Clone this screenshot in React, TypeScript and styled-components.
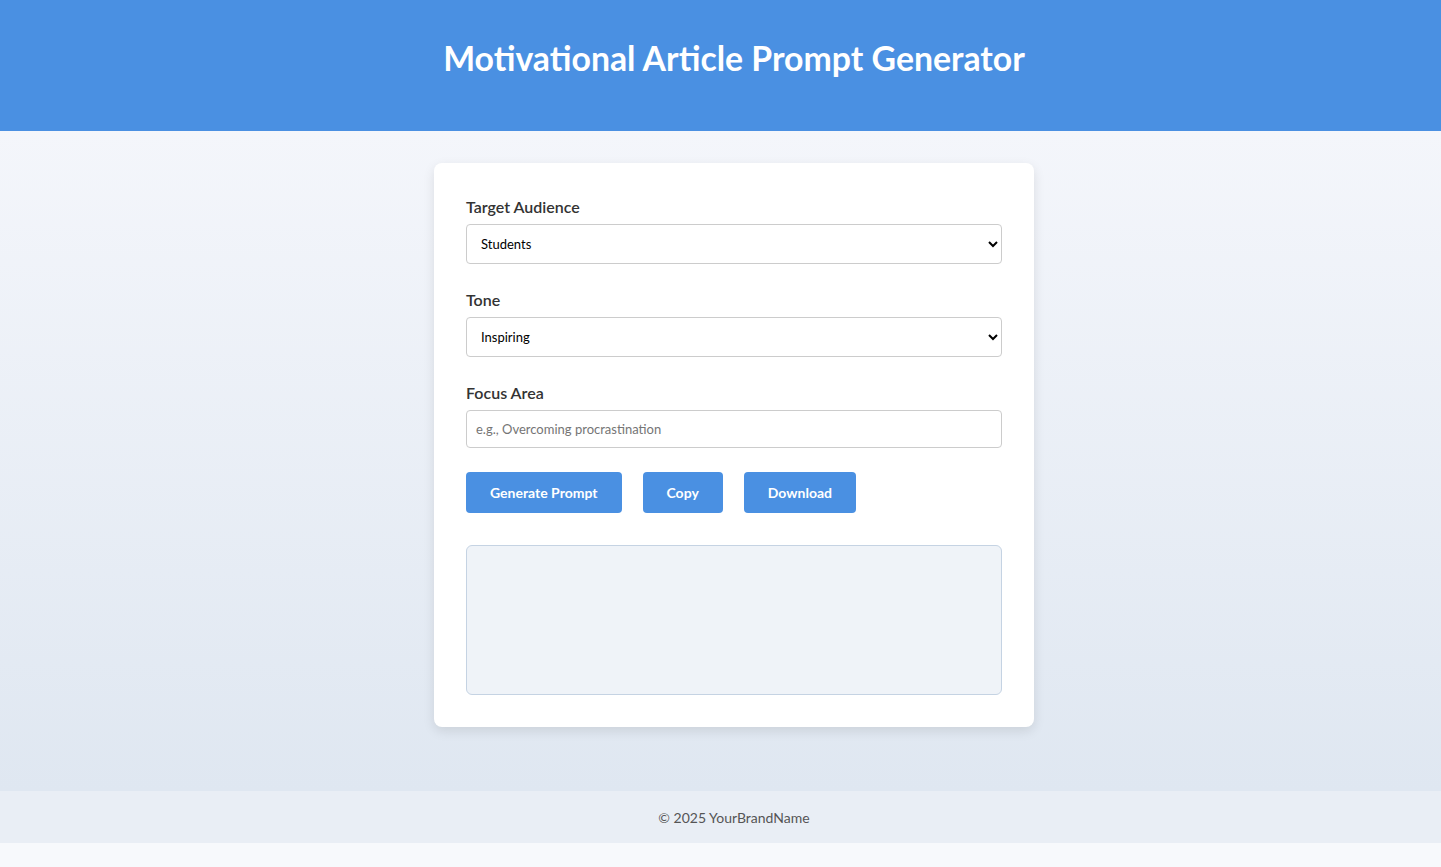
import styled, { createGlobalStyle } from 'styled-components';
import { useState } from 'react';

const GlobalStyle = createGlobalStyle`
  * {
    box-sizing: border-box;
  }

  body {
    margin: 0;
    font-family: 'Segoe UI', Lato, sans-serif;
    background: #f7f9fc;
    color: #333;
  }
`;

const audiences = ['Students', 'Professionals', 'Entrepreneurs', 'Athletes'];
const tones = ['Inspiring', 'Encouraging', 'Empowering', 'Reflective'];

const App = () => {
  const [audience, setAudience] = useState('Students');
  const [tone, setTone] = useState('Inspiring');
  const [focus, setFocus] = useState('');
  const [output, setOutput] = useState('');

  const generate = () => {
    const topic = focus || 'personal growth';
    setOutput(
      `Write a ${tone.toLowerCase()} motivational article for ${audience.toLowerCase()} about ${topic}.`
    );
  };

  const copy = () => {
    navigator.clipboard?.writeText(output);
  };

  const download = () => {
    const blob = new Blob([output], { type: 'text/plain' });
    const url = URL.createObjectURL(blob);
    const a = document.createElement('a');
    a.href = url;
    a.download = 'prompt.txt';
    a.click();
    URL.revokeObjectURL(url);
  };

  return (
    <>
      <GlobalStyle />
      <Header>
        <h1>Motivational Article Prompt Generator</h1>
      </Header>
      <Main>
        <Card>
          <FormGroup>
            <Label htmlFor="audience">Target Audience</Label>
            <Select id="audience" value={audience} onChange={(e) => setAudience(e.target.value)}>
              {audiences.map((a) => (
                <option key={a}>{a}</option>
              ))}
            </Select>
          </FormGroup>
          <FormGroup>
            <Label htmlFor="tone">Tone</Label>
            <Select id="tone" value={tone} onChange={(e) => setTone(e.target.value)}>
              {tones.map((t) => (
                <option key={t}>{t}</option>
              ))}
            </Select>
          </FormGroup>
          <FormGroup>
            <Label htmlFor="focus">Focus Area</Label>
            <Input
              id="focus"
              type="text"
              placeholder="e.g., Overcoming procrastination"
              value={focus}
              onChange={(e) => setFocus(e.target.value)}
            />
          </FormGroup>
          <ButtonRow>
            <Button onClick={generate}>Generate Prompt</Button>
            <Button onClick={copy}>Copy</Button>
            <Button onClick={download}>Download</Button>
          </ButtonRow>
          <Output>{output}</Output>
        </Card>
      </Main>
      <Footer>© 2025 YourBrandName</Footer>
    </>
  );
};

export default App;

// content is centred a little right of the window, as in the original page
const Header = styled.header`
  background: #4a90e2;
  color: #fff;
  height: 131px;
  display: flex;
  align-items: center;
  justify-content: center;
  padding: 0 0 16px 27px;

  h1 {
    margin: 0;
    font-size: 33.8px;
    font-weight: 700;
  }
`;

const Main = styled.main`
  background: linear-gradient(to bottom, #f4f6fb, #dfe7f1);
  padding: 32px 0 64px 27px;
`;

const Card = styled.div`
  width: 600px;
  margin: 0 auto;
  background: #fff;
  border-radius: 8px;
  padding: 32px;
  box-shadow: 0 4px 12px rgba(0, 0, 0, 0.1);
`;

const FormGroup = styled.div`
  margin-bottom: 24px;
`;

const Label = styled.label`
  display: block;
  font-size: 16px;
  font-weight: 600;
  line-height: 24px;
  margin-bottom: 5px;
  color: #333;
`;

const Select = styled.select`
  width: 100%;
  height: 40px;
  padding: 0 10px;
  font-family: inherit;
  font-size: 13px;
  border: 1px solid #ccc;
  border-radius: 4px;
  background: #fff;
  color: #000;
`;

const Input = styled.input`
  width: 100%;
  height: 38px;
  padding: 0 9px;
  font-family: inherit;
  font-size: 13px;
  border: 1px solid #ccc;
  border-radius: 4px;

  &::placeholder {
    color: #757575;
  }
`;

const ButtonRow = styled.div`
  display: flex;
  gap: 21px;
`;

const Button = styled.button`
  height: 41px;
  padding: 0 24px;
  background: #4a90e2;
  color: #fff;
  border: none;
  border-radius: 4px;
  font-family: inherit;
  font-size: 14px;
  font-weight: 700;
  cursor: pointer;

  &:hover {
    background: #357abd;
  }
`;

const Output = styled.div`
  margin-top: 32px;
  height: 150px;
  background: #eff3f8;
  border: 1px solid #c5d3e3;
  border-radius: 6px;
  padding: 12px;
  font-size: 14px;
  white-space: pre-wrap;
`;

const Footer = styled.footer`
  background: #e9eef5;
  height: 52px;
  display: flex;
  align-items: center;
  justify-content: center;
  padding-left: 27px;
  font-size: 14px;
  color: #555;
`;
